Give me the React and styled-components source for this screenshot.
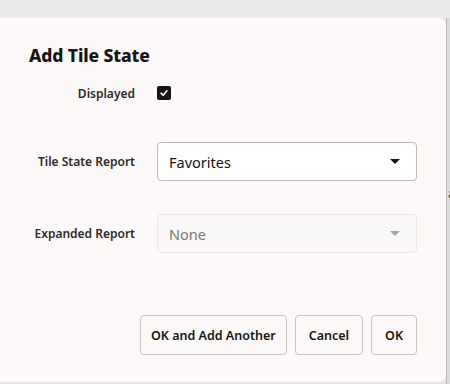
import React from 'react';
import styled, { createGlobalStyle } from 'styled-components';

const GlobalStyle = createGlobalStyle`
  html, body {
    margin: 0;
    padding: 0;
    background: #e4e4e4;
  }
  body {
    font-family: "Noto Sans", "Liberation Sans", sans-serif;
    color: #161513;
  }
`

const Screen = styled.div`
  width: 450px;
  height: 384px;
  display: flex;
  flex-direction: column;
  overflow: hidden;
`

const TopStrip = styled.div`
  height: 18px;
  flex: none;
  background: #ebebea;
`

const Body = styled.div`
  flex: 1;
  display: flex;
  min-height: 0;
`

const Dialog = styled.div`
  width: 446px;
  height: 364px;
  box-sizing: border-box;
  background: #fcf9f8;
  border-radius: 0 7px 7px 0;
  padding: 26px 29px 0 29px;
  display: flex;
  flex-direction: column;
`

const Side = styled.div`
  flex: 1;
  background: #dcdcdc;
  border-left: 1px solid #b9b9b9;
  position: relative;
`

const SideGlyph = styled.span`
  position: absolute;
  left: 1px;
  top: 166px;
  font-size: 13px;
  color: #333;
`

const Title = styled.h1`
  margin: 0;
  font-size: 17.5px;
  line-height: 22px;
  font-weight: 800;
  letter-spacing: -0.1px;
`

const Row = styled.div`
  display: flex;
  align-items: center;
  height: ${p => p.$h || 39}px;
  margin-top: ${p => p.$mt}px;
`

const Label = styled.label`
  width: 106px;
  flex: none;
  text-align: right;
  font-size: 12px;
  font-weight: 600;
  color: #2b2a28;
  margin-right: 22px;
  white-space: nowrap;
`

const Check = styled.span`
  width: 14px;
  height: 14px;
  border-radius: 2px;
  background: #161513;
  display: flex;
  align-items: center;
  justify-content: center;
`

const Select = styled.div`
  width: 260px;
  height: 39px;
  box-sizing: border-box;
  border: 1px solid ${p => p.$disabled ? '#eae7e5' : '#bdbab7'};
  border-radius: 4px;
  background: ${p => p.$disabled ? '#faf8f7' : '#ffffff'};
  display: flex;
  align-items: center;
  justify-content: space-between;
  padding: 0 16px 0 11px;
  font-size: 14.5px;
  color: ${p => p.$disabled ? '#7a7773' : '#161513'};
`

const Caret = styled.span`
  width: 0;
  height: 0;
  border-left: 5px solid transparent;
  border-right: 5px solid transparent;
  border-top: 5px solid ${p => p.$disabled ? '#a8a5a2' : '#161513'};
`

const Footer = styled.div`
  display: flex;
  justify-content: flex-end;
  gap: 8px;
  margin-top: 62px;
`

const Button = styled.button`
  height: 40px;
  box-sizing: border-box;
  padding: 0 ${p => p.$px || 12}px;
  border: 1px solid #c9c6c3;
  border-radius: 4px;
  background: #fcf9f8;
  font-family: inherit;
  font-size: 12.5px;
  font-weight: 600;
  color: #161513;
  cursor: pointer;
`

function App() {
  return (
    <Screen>
      <GlobalStyle />
      <TopStrip />
      <Body>
        <Dialog>
          <Title>Add Tile State</Title>
          <Row $mt={12} $h={30}>
            <Label>Displayed</Label>
            <Check>
              <svg width="10" height="10" viewBox="0 0 10 10">
                <path d="M2 5.2 L4.1 7.2 L8 2.8" fill="none" stroke="#fff" strokeWidth="1.6" strokeLinecap="round" strokeLinejoin="round" />
              </svg>
            </Check>
          </Row>
          <Row $mt={34}>
            <Label>Tile State Report</Label>
            <Select>
              <span>Favorites</span>
              <Caret />
            </Select>
          </Row>
          <Row $mt={33}>
            <Label>Expanded Report</Label>
            <Select $disabled>
              <span>None</span>
              <Caret $disabled />
            </Select>
          </Row>
          <Footer>
            <Button $px={10}>OK and Add Another</Button>
            <Button $px={13}>Cancel</Button>
            <Button $px={13}>OK</Button>
          </Footer>
        </Dialog>
        <Side><SideGlyph>a</SideGlyph></Side>
      </Body>
    </Screen>
  );
}

export default App;
